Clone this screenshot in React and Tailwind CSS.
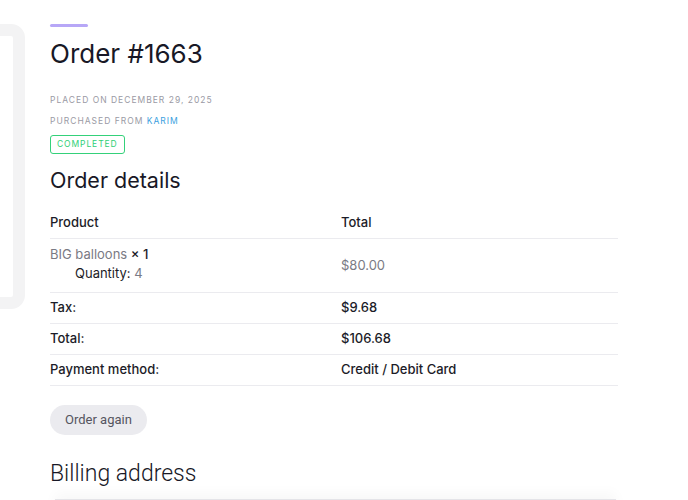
import React from 'react';

const sans = { fontFamily: '"Inter", "Noto Sans", sans-serif' };

const Row = ({ label, value }) => (
    <div className="grid grid-cols-[291px_1fr] border-b border-[#ebebef] h-[31px] items-center text-[13px] font-medium text-[#1c1c28]">
        <span>{label}</span>
        <span>{value}</span>
    </div>
);

const App = () => {
    return (
        <div className="relative w-[688px] h-[500px] overflow-hidden bg-white" style={sans}>
            {/* Sidebar card (cropped on the left) */}
            <div className="absolute left-[-40px] top-[24px] w-[65px] h-[285px] rounded-[14px] border-[12px] border-[#f3f3f4] bg-white"></div>

            <div className="pl-[50px] pt-[24px] w-[618px]">
                <div className="w-[38px] h-[3px] rounded-full bg-[#b7a7f7]"></div>

                <h1 className="mt-[10px] text-[26px] leading-[34px] text-[#181826] font-normal">Order #1663</h1>

                <div className="mt-[23px] text-[8.5px] uppercase tracking-[1px] text-[#9a9aa4] leading-[12px]">
                    Placed on December 29, 2025
                </div>
                <div className="mt-[9px] text-[8.5px] uppercase tracking-[1px] text-[#9a9aa4] leading-[12px]">
                    Purchased from <span className="text-[#3b9fe0]">Karim</span>
                </div>
                <div className="mt-[8px] inline-flex items-center h-[19px] px-[6px] border border-[#34d17a] rounded-[3px] text-[8.5px] uppercase tracking-[0.9px] text-[#2fcf77]">
                    Completed
                </div>

                <h2 className="mt-[12px] text-[21.5px] leading-[28px] text-[#181826] font-normal">Order details</h2>

                {/* Table */}
                <div className="mt-[10px]">
                    <div className="grid grid-cols-[291px_1fr] border-b border-[#ebebef] h-[35px] pt-[4px] items-center text-[13px] font-medium text-[#1c1c28]">
                        <span>Product</span>
                        <span>Total</span>
                    </div>
                    <div className="grid grid-cols-[291px_1fr] border-b border-[#ebebef] h-[54px] items-center text-[13px]">
                        <div className="flex flex-col leading-[19px] -mt-[3px]">
                            <span className="text-[#7a7a84]">BIG balloons <span className="font-medium text-[#1c1c28]">× 1</span></span>
                            <span className="pl-[25px] text-[#1c1c28]">Quantity: <span className="text-[#7a7a84]">4</span></span>
                        </div>
                        <span className="text-[#7a7a84]">$80.00</span>
                    </div>
                    <Row label="Tax:" value="$9.68" />
                    <Row label="Total:" value="$106.68" />
                    <Row label="Payment method:" value="Credit / Debit Card" />
                </div>

                <button className="mt-[19px] h-[30px] px-[15px] rounded-full bg-[#ebebef] text-[13px] text-[#555560]" style={{ fontFamily: 'Roboto, sans-serif' }}>
                    Order again
                </button>

                <h2 className="mt-[26px] text-[23px] leading-[26px] text-[#181826] font-light" style={{ fontFamily: 'Roboto, sans-serif' }}>Billing address</h2>

                <div className="mt-[12px] ml-[5px] w-[561px] h-[40px] border-t border-[#e4e4e8] shadow-[0_-6px_12px_rgba(0,0,0,0.03)]"></div>
            </div>
        </div>
    );
};

export default App;
